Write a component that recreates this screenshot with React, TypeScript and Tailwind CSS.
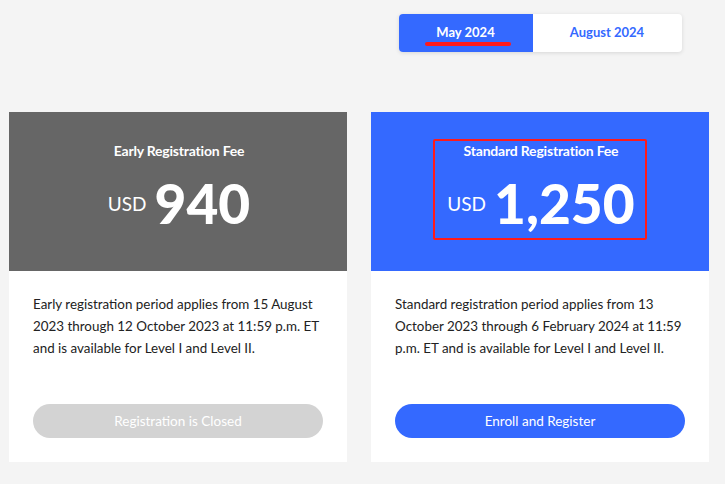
import React from 'react';

const font = { fontFamily: 'Lato, "Open Sans", sans-serif' };

interface FeeCardProps {
  title: string;
  amount: string;
  text: string;
  button: string;
  active: boolean;
  highlight?: boolean;
}

const FeeCard: React.FC<FeeCardProps> = ({ title, amount, text, button, active, highlight }) => {
  return (
    <div className="flex flex-col bg-white">
      <div
        className={`flex h-[159px] justify-center pt-[27px] ${active ? 'bg-[#3469ff]' : 'bg-[#666666]'}`}
      >
        <div
          className={`flex h-[101px] flex-col items-center rounded-[2px] ${
            highlight ? 'border-2 border-[#ff1a1a] pl-[12px] pr-[10px]' : 'pl-[14px] pr-[12px] pt-[2px]'
          }`}
        >
          <div className="text-[14px] font-bold leading-[20px] tracking-[-0.2px] text-white">{title}</div>
          <div className="mt-[14px] flex items-center text-white">
            <span className="mr-[8px] text-[19px] font-normal leading-none">USD</span>
            <span className="text-[55px] font-black leading-[56px]">{amount}</span>
          </div>
        </div>
      </div>
      <div className="flex h-[191px] flex-col px-[24px] pt-[22px] pb-[24px]">
        <p className="text-[13.4px] leading-[22px] text-[#222222]">{text}</p>
        <button
          className={`mt-auto h-[34px] w-full rounded-full text-[13.5px] text-white ${
            active ? 'bg-[#3469ff]' : 'bg-[#d3d3d3]'
          }`}
        >
          {button}
        </button>
      </div>
    </div>
  );
};

const App: React.FC = () => {
  return (
    <div className="min-h-[484px] w-[725px] bg-[#f4f4f4] pt-[14px] pl-[9px] pr-[16px]" style={font}>
      <div className="grid grid-cols-2 gap-x-[24px]">
        <div />
        <div className="flex justify-center">
          <div className="flex h-[38px] overflow-hidden rounded-[4px] bg-white shadow-[0_1px_4px_rgba(0,0,0,0.12)]">
            <button className="relative flex w-[134px] items-center justify-center bg-[#3469ff] text-[13px] font-bold text-white">
              May 2024
              <span className="absolute left-[26px] top-[28px] h-[4px] w-[86px] rounded-full bg-[#ff1a1a]" />
            </button>
            <button className="flex w-[149px] items-center justify-center text-[13px] font-bold text-[#3469ff]">
              August 2024
            </button>
          </div>
        </div>
      </div>
      <div className="mt-[60px] grid grid-cols-2 gap-x-[24px]">
        <FeeCard
          title="Early Registration Fee"
          amount="940"
          text="Early registration period applies from 15 August 2023 through 12 October 2023 at 11:59 p.m. ET and is available for Level I and Level II."
          button="Registration is Closed"
          active={false}
        />
        <FeeCard
          title="Standard Registration Fee"
          amount="1,250"
          text="Standard registration period applies from 13 October 2023 through 6 February 2024 at 11:59 p.m. ET and is available for Level I and Level II."
          button="Enroll and Register"
          active
          highlight
        />
      </div>
    </div>
  );
};

export default App;
